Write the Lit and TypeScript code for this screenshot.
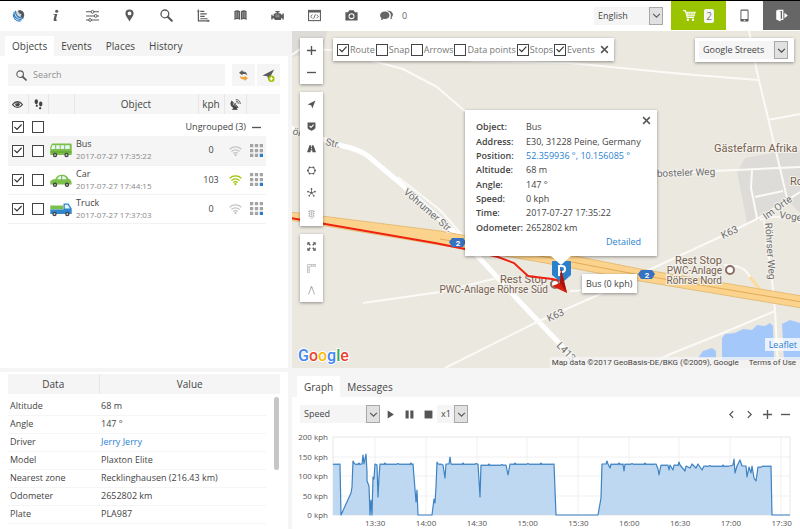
import { LitElement, html, svg, css } from "lit";
import { customElement, state } from "lit/decorators.js";
import { classMap } from "lit/directives/class-map.js";

const glyphs: Record<string, unknown> = {
  logo: svg`<circle cx="9.5" cy="7" r="5.6" fill="#d5d8db"/><path d="M8 1.6C12 .6 15.2 3.5 15 7.4c0 2-.8 3.400-2 4.500L10.500 9l1.200-2.500L9 5.500 7.500 3z" fill="#55585c"/><path d="M2.500 3.500C2 9 5.500 12.800 12 13.400M1.600 6.500C1.600 11.500 5 15 10.500 15M4.200 2.200C4.200 7 7.500 11 14 11.600" fill="none" stroke="#2f7cc4" stroke-width="1.500"/>`,
  info: svg`<circle cx="9.500" cy="2.700" r="1.900" fill="currentColor"/><path d="M5 6h5.200L8.600 12.600c-.1.600.2.800 1.600.2l-.2.900C8 15.300 5.200 15.200 5.700 12.800L7 7.500c0-.500-.7-.600-2.200-.600z" fill="currentColor"/>`,
  sliders: svg`<path d="M0 3.500h16M0 8.500h16M0 13.500h16" stroke="currentColor" stroke-width="1.300"/><g fill="#fff" stroke="currentColor" stroke-width="1.200"><circle cx="8" cy="3.500" r="1.700"/><circle cx="12" cy="8.500" r="1.700"/><circle cx="5" cy="13.500" r="1.700"/></g>`,
  pin: svg`<path fill="currentColor" fill-rule="evenodd" d="M8 .5a5 5 0 0 0-5 5C3 9 6.500 11.500 8 15.800 9.500 11.500 13 9 13 5.500a5 5 0 0 0-5-5zm0 2.700a2.300 2.300 0 1 1 0 4.600 2.300 2.300 0 0 1 0-4.600z"/>`,
  search: svg`<circle cx="6" cy="6" r="4.800" fill="none" stroke="currentColor" stroke-width="1.600"/><path d="M9.500 9.500l5 5" stroke="currentColor" stroke-width="2.600" stroke-linecap="round"/>`,
  bars: svg`<path d="M1.700 1v13.500H15M4 3h5M4 6h8M4 9h5.500M4 12h9" fill="none" stroke="currentColor" stroke-width="1.500"/><path d="M0 3l1.700-2.500L3.400 3zM13 12.800l2.800 1.700-2.800 1.700z" fill="currentColor"/>`,
  book: svg`<path fill="currentColor" d="M.5 2.500C3 1 5.500 1.200 7.500 2.800v10.700C5.500 12 3 12 .5 13.500zM15.500 2.500C13 1 10.500 1.200 8.500 2.800v10.700c2-1.500 4.500-1.500 7 0z"/><path d="M2.600 3.500v7.500M5.200 3.500v7.500M10.800 3.500v7.500M13.400 3.500v7.500" stroke="#fff" stroke-width=".5"/>`,
  engine: svg`<path fill="currentColor" d="M5.500 2.500h5V4H9v1.300h2.500L13 7h1V5.500h1.800v7.300H14V11h-1l-1 2.500H5L3.200 11.500H2V13H.3V7H2v1.500h1.200V6.500l1.800-1.200h2V4H5.500z"/><path d="M5.500 7.500h5M5.500 9.500h5" stroke="#fff" stroke-width=".5"/>`,
  code: svg`<rect x=".7" y="1.700" width="14.600" height="12.600" fill="none" stroke="currentColor" stroke-width="1.300"/><path d="M1 3.300h14" stroke="currentColor" stroke-width="2"/><path d="M5.500 7L3.300 9.200l2.200 2.200M10.500 7l2.200 2.200-2.200 2.200M9 6.700L7 11.800" fill="none" stroke="currentColor" stroke-width="1.100"/>`,
  camera: svg`<path fill="currentColor" fill-rule="evenodd" d="M.5 4h3.300l1.400-2.500h5.600L12.200 4h3.300v10H.5zM8 5.100a3.700 3.700 0 1 0 0 7.400 3.700 3.700 0 0 0 0-7.400z"/><circle cx="8" cy="8.800" r="2.400" fill="currentColor"/>`,
  chat: svg`<path fill="currentColor" d="M6 3c3.300 0 5.700 2 5.700 4.600S9.300 12.200 6 12.200c-.6 0-1.200 0-1.700-.2-1 1.200-2 1.700-3.500 1.800.8-.8 1-1.700 1-2.700C.7 10.200.1 9 .1 7.600.1 5 2.700 3 6 3z"/><path fill="currentColor" d="M8 2.200c4-.8 7.900 1.300 7.900 4.600 0 1.400-.6 2.500-1.600 3.300 0 .8.300 1.700 1 2.400-1.300 0-2-.4-2.800-1C15 7.500 12.500 3 8 2.200z"/>`,
  cart: svg`<path d="M.3 2h2.500l2.400 8.500h8.300" fill="none" stroke="currentColor" stroke-width="1.300"/><path fill="currentColor" d="M3.800 3.500h12L14 9.200H5.400z"/><circle cx="6" cy="13.300" r="1.500" fill="currentColor"/><circle cx="12.300" cy="13.300" r="1.500" fill="currentColor"/><path d="M7 3.500l.6 5.700M9.800 3.500v5.700M12.800 3.500l-.8 5.700M4.500 6.200h10.500" stroke="#9bc400" stroke-width=".6"/>`,
  phone: svg`<path fill="currentColor" fill-rule="evenodd" d="M4.500.5h7a1.500 1.500 0 0 1 1.500 1.500v12a1.500 1.500 0 0 1-1.500 1.500h-7A1.500 1.500 0 0 1 3 14V2A1.500 1.500 0 0 1 4.500.5zM4.200 2v10.300h7.600V2zM7 13.200v1.200h2v-1.200z"/>`,
  logout: svg`<path fill="currentColor" d="M1.500 1.500L7 3v12.500L1.500 13z"/><path d="M3 1.800h6.500v11H7" fill="none" stroke="currentColor" stroke-width="1.600"/><path d="M11.500 4.500L15.800 8l-4.300 3.500z" fill="currentColor"/>`,
  refresh: svg`<path fill="#5b5b5b" d="M6.500 0v2.300C10.500 2 13.300 4 13.500 8 12 5.800 10 5.500 6.500 5.700V8L1.500 4z"/><path fill="#f2a33a" d="M9.500 16v-2.300C5.500 14 2.700 12 2.500 8c1.500 2.200 3.500 2.500 7 2.300V8l5 4z"/>`,
  addObject: svg`<path fill="#5b5b5b" d="M15 .5L.5 8l6 .8 1.500 4.700z"/><circle cx="11.500" cy="12" r="3.900" fill="#9bc400"/><path d="M9.300 12h4.400M11.500 9.800v4.400" stroke="#fff" stroke-width="1.500"/>`,
  eye: svg`<path d="M.8 8.200C3 5 5.400 3.800 8 3.800s5 1.200 7.200 4.400C13 11.200 10.600 12.300 8 12.300S3 11.200.8 8.200z" fill="none" stroke="currentColor" stroke-width="1.500"/><circle cx="8" cy="7.800" r="3.200" fill="currentColor"/><path d="M6.300 7.500A2 2 0 0 1 8 6" stroke="#fff" stroke-width=".8" fill="none"/>`,
  feet: svg`<g fill="currentColor"><ellipse cx="4.800" cy="4" rx="2.500" ry="3.600"/><ellipse cx="5.500" cy="9.700" rx="1.500" ry="1.700"/><ellipse cx="11.200" cy="7.300" rx="2.500" ry="3.600"/><ellipse cx="10.300" cy="13.300" rx="1.500" ry="1.700"/></g>`,
  dish: svg`<path d="M2.500 3.500a6.200 6.200 0 0 0 8.600 8.400z" fill="currentColor" stroke="currentColor" stroke-width="1.600"/><path d="M4 6l5 5M6.300 5.500l-2 4" stroke="#f5f5f5" stroke-width=".8"/><path d="M3.500 15.200h7L7 11.500zM6.500 8.300l2.700-3" fill="currentColor" stroke="currentColor" stroke-width="1.100"/><path d="M8.500 3.300a3.500 3.500 0 0 1 3.700 3.800M8.500.8a6 6 0 0 1 6.400 6.500" fill="none" stroke="currentColor" stroke-width="1.200"/>`,
  wifi: svg`<path d="M.8 6.500a10.500 10.500 0 0 1 14.400 0M3 9.200a7.300 7.300 0 0 1 10 0M5.300 11.800a4 4 0 0 1 5.400 0" fill="none" stroke="currentColor" stroke-width="1.600"/><circle cx="8" cy="13.600" r="1.400" fill="currentColor"/>`,
  grid: svg`<path fill="#a3a3a3" d="M0 0h4v4H0zM6 0h4v4H6zM12 0h4v4h-4zM0 6h4v4H0zM6 6h4v4H6zM12 6h4v4h-4zM0 12h4v4H0zM6 12h4v4H6z"/><path fill="#2b78cf" d="M12 12h4v4h-4z"/>`,
  plus: svg`<path d="M8 0v16M0 8h16" stroke="currentColor" stroke-width="2.400"/>`,
  minus: svg`<path d="M0 8h16" stroke="currentColor" stroke-width="2.400"/>`,
  close: svg`<path d="M2 2l12 12M14 2L2 14" stroke="currentColor" stroke-width="2.600"/>`,
  left: svg`<path d="M11 2L5 8l6 6" fill="none" stroke="currentColor" stroke-width="2.200"/>`,
  right: svg`<path d="M5 2l6 6-6 6" fill="none" stroke="currentColor" stroke-width="2.200"/>`,
  down: svg`<path d="M2 5l6 6 6-6" fill="none" stroke="currentColor" stroke-width="2"/>`,
  play: svg`<path d="M3 1l11 7-11 7z" fill="currentColor"/>`,
  pause: svg`<path d="M1 1h5.500v14H1zM9.500 1H15v14H9.500z" fill="currentColor"/>`,
  stop: svg`<path d="M1 1h14v14H1z" fill="currentColor"/>`,
  nav: svg`<path d="M15 1L1 8l6.500 1.500L9.500 15z" fill="currentColor"/>`,
  shield: svg`<path d="M1 1h14v9c0 2-3 3.500-7 5.500C4 13.500 1 12 1 10z" fill="currentColor"/><path d="M4.500 7l2.700 2.700 4.500-5" fill="none" stroke="#fff" stroke-width="1.800"/>`,
  road: svg`<path d="M4.500 2h2.700v3h1.600V2h2.700L16 14.500H9.500V11h-3v3.500H0z" fill="currentColor"/><path d="M8 6.500v3" stroke="#fff" stroke-width="1.400"/>`,
  hexagon: svg`<path d="M4.500 2.500h7L15 8l-3.500 5.500h-7L1 8z" fill="none" stroke="currentColor" stroke-width="1.300"/><g fill="currentColor"><circle cx="4.500" cy="2.500" r="1.700"/><circle cx="11.500" cy="2.500" r="1.700"/><circle cx="14.200" cy="8" r="1.700"/><circle cx="1.800" cy="8" r="1.700"/><circle cx="4.500" cy="13.500" r="1.700"/><circle cx="11.500" cy="13.500" r="1.700"/></g>`,
  cluster: svg`<path d="M8 8.500V2M8 8.500L2 6.500M8 8.500l6-2M8 8.500l-4 5M8 8.500l4 5" stroke="currentColor" stroke-width="1.300"/><g fill="currentColor"><circle cx="8" cy="8.500" r="1.900"/><circle cx="8" cy="1.700" r="1.500"/><circle cx="1.700" cy="6.300" r="1.500"/><circle cx="14.300" cy="6.300" r="1.500"/><circle cx="4" cy="13.800" r="1.500"/><circle cx="12" cy="13.800" r="1.500"/></g>`,
  traffic: svg`<path d="M5 .5h6v12.500L8 15.500 5 13z" fill="none" stroke="currentColor" stroke-width="1.200"/><path d="M2 2.500h3M11 2.500h3M2.500 6.500H5M11 6.500h2.500M2.500 10.500H5M11 10.500h2.500" stroke="currentColor" stroke-width="1.600"/><g fill="currentColor"><circle cx="8" cy="3.500" r="1.400"/><circle cx="8" cy="7.300" r="1.400"/><circle cx="8" cy="11" r="1.400"/></g>`,
  expand: svg`<path d="M.5.5h5.300L4 2.300l2.700 2.700L5 6.700 2.300 4 .5 5.800zM15.500.5v5.300L13.700 4 11 6.700 9.300 5 12 2.300 10.200.5zM.5 15.500v-5.300L2.300 12 5 9.300 6.700 11 4 13.700l1.800 1.800zM15.500 15.500h-5.300l1.800-1.800L9.300 11 11 9.300l2.700 2.700 1.800-1.800z" fill="currentColor"/>`,
  ruler: svg`<path d="M1 16V1h15v3H4v12z" fill="none" stroke="currentColor" stroke-width="1.200"/><path d="M1.500 7H4M1.500 11H4M8 1.500V4M12 1.500V4" stroke="currentColor" stroke-width="1"/>`,
  compass: svg`<path d="M8 1L2.500 15M8 1l5.500 14" fill="none" stroke="currentColor" stroke-width="1.700"/><circle cx="8" cy="2" r="1.600" fill="currentColor"/>`,
};

const icon = (name: string, cls = "") =>
  html`<svg class="ic ${cls}" viewBox="0 0 16 16" aria-hidden="true">${glyphs[name]}</svg>`;

const vehicles: Record<string, unknown> = {
  Bus: svg`<path fill="#7cc04b" d="M2 1.500h18.500c.8 0 1.200.5 1.200 1.300V13H.3V5z"/><path fill="#e8f6f8" d="M2.200 3.300h3v3.800h-4zM6.200 3.300h3.500v3.800H6.200zM10.700 3.300h3.500v3.800h-3.500zM15.200 3.300h4.500v3.800h-4.500z"/><path fill="#5b9c33" d="M.3 9.500h21.400v1H.3z"/><g fill="#444"><circle cx="5" cy="13" r="2.200"/><circle cx="16.500" cy="13" r="2.200"/></g><g fill="#ccc"><circle cx="5" cy="13" r=".9"/><circle cx="16.500" cy="13" r=".9"/></g>`,
  Car: svg`<path fill="#7cc04b" d="M.3 9.500C1 8 3 7.300 5.300 7 7 4 8.500 2.800 12 2.800c4 0 5.500 1.700 6.500 4 2.300.5 3.200 2 3.200 5.700H.3z"/><path fill="#e8f6f8" d="M7 7.300c1-2 2-3 4-3.200v3.200zM12.200 4.100c2.300 0 3.500 1 4.300 3.200h-4.300z"/><g fill="#444"><circle cx="5" cy="12.800" r="2.200"/><circle cx="17" cy="12.800" r="2.200"/></g><g fill="#ccc"><circle cx="5" cy="12.800" r=".9"/><circle cx="17" cy="12.800" r=".9"/></g>`,
  Truck: svg`<path fill="#7cc04b" d="M.3 4.500h13v4H.3z"/><path fill="#2f86cf" d="M.3 8.500h13.200V2.500h5l3.200 5V13H.3z"/><path fill="#e8f6f8" d="M14.800 3.800h3l2.200 3.700h-5.200z"/><g fill="#444"><circle cx="4.500" cy="13" r="2.200"/><circle cx="17.300" cy="13" r="2.200"/></g><g fill="#ccc"><circle cx="4.500" cy="13" r=".9"/><circle cx="17.300" cy="13" r=".9"/></g>`,
};

const objects = [
  { name: "Bus", time: "2017-07-27 17:35:22", speed: 0, online: false },
  { name: "Car", time: "2017-07-27 17:44:15", speed: 103, online: true },
  { name: "Truck", time: "2017-07-27 17:37:03", speed: 0, online: false },
];

const details: [string, string][] = [
  ["Altitude", "68 m"],
  ["Angle", "147 °"],
  ["Driver", "Jerry Jerry"],
  ["Model", "Plaxton Elite"],
  ["Nearest zone", "Recklinghausen (216.43 km)"],
  ["Odometer", "2652802 km"],
  ["Plate", "PLA987"],
];

const popupRows: [string, string][] = [
  ["Object:", "Bus"],
  ["Address:", "E30, 31228 Peine, Germany"],
  ["Position:", "52.359936 °, 10.156085 °"],
  ["Altitude:", "68 m"],
  ["Angle:", "147 °"],
  ["Speed:", "0 kph"],
  ["Time:", "2017-07-27 17:35:22"],
  ["Odometer:", "2652802 km"],
];

const layers: [string, boolean][] = [
  ["Route", true],
  ["Snap", false],
  ["Arrows", false],
  ["Data points", false],
  ["Stops", true],
  ["Events", true],
];

const menu = ["logo", "info", "sliders", "pin", "search", "bars", "book", "engine", "code", "camera"];

// Speed samples as [x, y] in a 457 x 78 plot.
const speed: [number, number][] = [
  [0, 27], [7, 27], [8, 78], [18, 56], [19, 50], [20, 24], [21, 26], [22, 27], [29, 27], [30, 18], [31, 27], [33, 17],
  [34, 35], [34, 44], [36, 49], [37, 78], [38, 63], [39, 78], [40, 40], [41, 42], [42, 27], [44, 28], [45, 60],
  [46, 40], [47, 27], [80, 27], [83, 65], [84, 53], [85, 78], [99, 78], [101, 62], [102, 66], [103, 50], [104, 25], [105, 27],
  [110, 28], [112, 41], [113, 27], [116, 27], [117, 20], [118, 27], [145, 27], [146, 43], [147, 60], [148, 28],
  [173, 28], [175, 38], [177, 27], [221, 27], [223, 78], [265, 78], [268, 61], [269, 27], [273, 27], [274, 24],
  [275, 27], [277, 31], [278, 27], [290, 27], [291, 34], [292, 27], [323, 27], [325, 32], [326, 38], [328, 28],
  [335, 28], [336, 33], [337, 28], [340, 33], [341, 28], [346, 25], [347, 28], [352, 34], [353, 29], [357, 31],
  [359, 27], [363, 31], [365, 27], [369, 33], [371, 29], [397, 29], [400, 28], [401, 22], [402, 36], [404, 29],
  [407, 23], [409, 29], [413, 29], [414, 40], [416, 30], [418, 36], [419, 29], [421, 41], [423, 44], [425, 30],
  [430, 29], [438, 29], [439, 78], [457, 78],
];

function speedPath(): string {
  const parts: string[] = [];
  speed.forEach(([x, y], i) => {
    parts.push(`${x} ${y}`);
    const next = speed[i + 1];
    if (next && next[0] - x > 4 && y < 32 && next[1] < 32) {
      for (let k = x + 1; k < next[0]; k++) {
        parts.push(`${k} ${y + (k % 2 ? 0.6 : 0) - ((k * 7) % 13 === 0 ? 1 : 0)}`);
      }
    }
  });
  return "M" + parts.join("L");
}

const base = css`
  * { box-sizing: border-box; }
  button { border: 0; padding: 0; margin: 0; background: none; color: inherit; font: inherit; display: flex; align-items: center; justify-content: center; }
  a { color: #2b7fd0; text-decoration: none; }
  .ic { width: 13px; height: 13px; display: block; flex: none; }
  .s9 { width: 9px; height: 9px; }
  .s11 { width: 11px; height: 11px; }
  .pick { display: grid; align-items: center; background: #f5f5f5; height: 18px; }
  .pick select { grid-area: 1 / 1; appearance: none; border: 0; background: none; font: inherit; color: #444; padding: 0 18px 0 4px; margin: 0; width: 100%; height: 100%; }
  .pick .arrow { grid-area: 1 / 1; justify-self: end; width: 14px; height: 18px; border: 1px solid #a8a8a8; background: #e1e1e1; display: flex; align-items: center; justify-content: center; pointer-events: none; }
  input[type="checkbox"] { appearance: none; width: 12px; height: 12px; margin: 0; border: 1px solid #444; background: #fff; display: inline-grid; place-items: center; flex: none; vertical-align: middle; }
  input[type="checkbox"]:checked::after { content: ""; width: 8px; height: 8px; background: #333; clip-path: polygon(0 50%, 10% 40%, 38% 66%, 90% 10%, 100% 20%, 38% 86%); }
  .tabs { display: flex; align-items: flex-end; background: #f5f5f5; padding: 5px 5px 0; font-size: 10px; }
  .tabs button { height: 20px; padding: 0 7px; color: #444; }
  .tabs .on { background: #fff; }
`;

const pick = (label: string, value: string) => html`
  <span class="pick">
    <select aria-label=${label}><option>${value}</option></select>
    <span class="arrow">${icon("down", "s9")}</span>
  </span>`;

@customElement("tracker-map")
export class TrackerMap extends LitElement {
  static styles = [
    base,
    css`
      :host { display: block; position: relative; overflow: hidden; background: #ebe8e0; min-height: 337px; }
      .canvas { position: absolute; inset: 0; width: 100%; height: 100%; font-family: Roboto, "Open Sans", sans-serif; }
      .road { fill: none; stroke: #fff; stroke-width: 2; stroke-linejoin: round; }
      .thin { stroke: #fbfaf6; }
      .wide { stroke-width: 5; }
      .street { font-size: 10px; fill: #6e6e6e; paint-order: stroke; stroke: #f4f2ed; stroke-width: 2px; }
      .place { font-size: 11px; fill: #75604f; paint-order: stroke; stroke: #f4f2ed; stroke-width: 2px; }
      .sub { font-size: 10px; }
      .exit { font-size: 8px; font-weight: 700; fill: #fff; text-anchor: middle; }
      .brand { font-size: 16px; font-weight: 500; paint-order: stroke; stroke: #fff; stroke-width: 2px; }
      .overlay { position: absolute; inset: 7px 6px auto 8px; display: flex; align-items: flex-start; gap: 10px; }
      .card { background: #fff; box-shadow: 0 1px 3px rgba(0, 0, 0, 0.4); }
      .stack { display: flex; flex-direction: column; gap: 8px; }
      .tools { padding: 1px 0; width: 23px; color: #555; }
      .tools button { width: 23px; height: 22px; }
      .tools .off { color: #aaa; }
      .layers { display: flex; align-items: center; height: 23px; padding: 0 5px 0 4px; gap: 1px; color: #777; }
      .layers label { display: flex; align-items: center; gap: 1px; white-space: nowrap; }
      .layers button { color: #555; margin-left: 4px; }
      .source { margin-left: auto; width: 99px; padding: 3px 6px 3px 4px; }
      .popup { position: absolute; left: 173px; top: 79px; width: 192px; padding: 10px 11px 8px; color: #444; }
      .popup::after { content: ""; position: absolute; left: 86px; top: 100%; width: 20px; height: 9px; background: #fff; clip-path: polygon(0 0, 100% 0, 50% 100%); }
      .popup dl { display: grid; grid-template-columns: 50px auto; grid-auto-rows: 1fr; align-items: center; min-height: 115px; margin: 0; line-height: 14px; white-space: nowrap; }
      .popup dt { font-weight: 600; }
      .popup dd { margin: 0; }
      .popup .more { display: block; text-align: right; padding-right: 5px; line-height: 13px; }
      .popup .x { position: absolute; right: 6px; top: 6px; color: #555; }
      .tip { position: absolute; left: 290px; top: 243px; padding: 3px 4px; line-height: 13px; color: #444; white-space: nowrap; }
      .credits { position: absolute; right: 0; bottom: 0; display: flex; flex-direction: column; align-items: flex-end; gap: 6px; line-height: 11px; }
      .leaflet { background: rgba(255, 255, 255, 0.75); padding: 1px 3px 1px 4px; }
      .terms { display: flex; gap: 10px; background: rgba(245, 245, 245, 0.75); padding: 0 4px 0 2px; font-family: Roboto, sans-serif; font-size: 8px; color: #444; white-space: nowrap; }
      .terms a { color: #444; }
    `,
  ];

  render() {
    return html`
      <svg class="canvas" viewBox="292 31 508 337" preserveAspectRatio="xMinYMin slice" role="img" aria-label="Map">
        <path fill="#dddcd9" d="M737 172L745 158 773 153 800 151V213L787 200 758 220 747 223z" />
        <path fill="#dddcd9" d="M292 31h35l-3 14-12 8-20 4z" />
        <path fill="#a5c8fa" d="M722 338l3-4 10-1 8-4 9 1 5-5 8 1 5-3 3 3 1 34h-52zM782 324l8-4 10 3v37h-16zM698 358l5-7 9-3 4 3v7z" />
        <path class="road wide" d="M285 126L343 146Q358 149 368 156L400 183 433 213 460 237 520 302 558 342 588 375" />
        <path class="road thin" d="M398 177L440 210 464 237M285 60L300 49 333 50 373 61 403 69 437 87 466 112M445 368L537 322 598 295 653 268 720 237 757 219 800 192" />
        <path class="road thin" d="M363 303L440 292 497 278M470 61L570 63 683 74 758 80M749 31L757 72 768 118 787 198M768 120L800 114M658 174L713 171 800 167" />
        <path class="road thin" d="M752 170L751 188 757 218M755 197L783 191M764 221L772 280 775 310 778 368M775 311L723 333 673 353 636 370M760 220Q775 213 800 222M570 291L590 290M724 265Q743 265 748 274L752 280" />
        <path d="M750 277L762 292" fill="none" stroke="#fbdc9c" stroke-width="3" />
        <path fill="#fbd38c" stroke="#e5bd78" d="M290 212L440 231 540 249 640 269 700 279 802 296V308L700 291 640 281 540 262 440 245 290 220z" />
        <path fill="none" stroke="#e0ac5e" d="M440 239L540 256 640 275 700 285 802 302" />
        <g class="street">
          <text transform="translate(292 134) rotate(18)">öhr</text>
          <text transform="translate(325 145) rotate(12)">Str.</text>
          <text transform="translate(403 193) rotate(41)">Vöhrumer Str.</text>
          <text transform="translate(657 177) rotate(-2)">bosteler Weg</text>
          <text transform="translate(723 239) rotate(-25)">K63</text>
          <text transform="translate(549 322) rotate(-25)">K63</text>
          <text transform="translate(556 346) rotate(46)">L413</text>
          <text transform="translate(766 220) rotate(-36)">Im Orte</text>
          <text transform="translate(779 218) rotate(8)">Vogel</text>
          <text transform="translate(765 223) rotate(86)">Röhrser Weg</text>
        </g>
        <g class="place">
          <text x="714" y="152">Gästefarm Afrika</text>
          <text x="790" y="185">Ro</text>
          <text x="722" y="264" text-anchor="end">Rest Stop</text>
          <text class="sub" x="722" y="274" text-anchor="end">PWC-Anlage</text>
          <text class="sub" x="722" y="284" text-anchor="end">Röhrse Nord</text>
          <text x="547" y="283" text-anchor="end">Rest Stop</text>
          <text class="sub" x="548" y="293" text-anchor="end">PWC-Anlage Röhrse Süd</text>
        </g>
        <g fill="#fff" stroke="#8a6d62" stroke-width="2"><circle cx="730" cy="270" r="4" /><circle cx="555" cy="284" r="4" /></g>
        <path d="M290 218L435 243 465 249 498 257 514 263 528 276 552 279 562 281" fill="none" stroke="#ee2211" stroke-width="2" />
        <g fill="#3672c0"><path d="M452 238h11l3 4-3 5h-11l-3-5zM641 270h11l3 4-3 5h-11l-3-5z" /></g>
        <g class="exit"><text x="458" y="246">2</text><text x="647" y="278">2</text></g>
        <path fill="#2b80cc" d="M553 261h17a1 1 0 0 1 1 1v13l-9 8-10-8v-13a1 1 0 0 1 1-1z" />
        <path d="M559 276v-10h3a2.500 2.500 0 0 1 0 6h-3" fill="none" stroke="#fff" stroke-width="2" />
        <path fill="#d8200f" d="M561 269L567 293 552 286 560 283z" /><path fill="#a81408" d="M561 269L567 293 560 283z" />
        <text class="brand" x="298" y="361"><tspan fill="#4285f4">G</tspan><tspan fill="#ea4335">o</tspan><tspan fill="#fbbc05">o</tspan><tspan fill="#4285f4">g</tspan><tspan fill="#34a853">l</tspan><tspan fill="#ea4335">e</tspan></text>
      </svg>

      <div class="overlay">
        <div class="stack">
          ${[["plus", "minus"], ["nav", "shield", "road", "hexagon", "cluster", "traffic"], ["expand", "ruler", "compass"]].map(
            (group) => html`<div class="card tools">
              ${group.map((n) => html`<button aria-label=${n} class=${classMap({ off: ["traffic", "ruler", "compass"].includes(n) })}>${icon(n, "s9")}</button>`)}
            </div>`
          )}
        </div>
        <div class="card layers">
          ${layers.map(([name, on]) => html`<label><input type="checkbox" .checked=${on} />${name}</label>`)}
          <button aria-label="Close layers">${icon("close", "s9")}</button>
        </div>
        <div class="card source">${pick("Map source", "Google Streets")}</div>
      </div>

      <div class="card tip">Bus (0 kph)</div>
      <div class="card popup">
        <button class="x" aria-label="Close">${icon("close", "s9")}</button>
        <dl>
          ${popupRows.map(([k, v]) => html`<dt>${k}</dt><dd>${k === "Position:" ? html`<a href="#position">${v}</a>` : v}</dd>`)}
        </dl>
        <a class="more" href="#detailed">Detailed</a>
      </div>

      <div class="credits">
        <a class="leaflet" href="#leaflet">Leaflet</a>
        <div class="terms"><span>Map data ©2017 GeoBasis-DE/BKG (©2009), Google</span><a href="#terms">Terms of Use</a></div>
      </div>
    `;
  }
}

@customElement("speed-graph")
export class SpeedGraph extends LitElement {
  static styles = [
    base,
    css`
      :host { display: flex; flex-direction: column; background: #fff; min-width: 0; }
      .tabs { padding-top: 8px; }
      .tabs button { height: 21px; }
      .bar { display: flex; align-items: center; padding: 7px 10px 0 8px; height: 27px; color: #555; }
      .param { width: 80px; }
      .rate { width: 31px; }
      .play { display: flex; gap: 10px; padding: 0 4px 0 6px; }
      .nav { display: flex; gap: 9px; margin-left: auto; }
      .chart { display: grid; grid-template-columns: 41px minmax(0, 1fr); padding: 8px 10px 1px 0; font-size: 8px; color: #555; line-height: 10px; }
      .y { display: flex; flex-direction: column; justify-content: space-between; align-items: flex-end; padding-right: 5px; height: 88px; white-space: nowrap; }
      .plot { width: 100%; height: 78px; margin-top: 5px; display: block; overflow: visible; }
      .frame { fill: none; stroke: #e6e6e6; stroke-width: 1; vector-effect: non-scaling-stroke; }
      .area { fill: #bfd8f1; }
      .line { fill: none; stroke: #3d82c2; stroke-width: 1.2px; vector-effect: non-scaling-stroke; stroke-linejoin: round; }
      .x { grid-column: 2; display: flex; justify-content: space-between; padding-left: 32px; margin-right: -2px; margin-top: -2px; }
    `,
  ];

  render() {
    const d = speedPath();
    return html`
      <div class="tabs"><button class="on">Graph</button><button>Messages</button></div>
      <div class="bar">
        <span class="param">${pick("Parameter", "Speed")}</span>
        <span class="play">
          <button aria-label="Play">${icon("play", "s9")}</button>
          <button aria-label="Pause">${icon("pause", "s9")}</button>
          <button aria-label="Stop">${icon("stop", "s9")}</button>
        </span>
        <span class="rate">${pick("Playback rate", "x1")}</span>
        <span class="nav">
          ${["left", "right", "plus", "minus"].map((n) => html`<button aria-label=${n}>${icon(n, "s9")}</button>`)}
        </span>
      </div>
      <div class="chart">
        <div class="y">${[200, 150, 100, 50, 0].map((v) => html`<span>${v} kph</span>`)}</div>
        <svg class="plot" viewBox="0 0 457 78" preserveAspectRatio="none" role="img" aria-label="Speed">
          ${[42, 93, 144, 194, 245, 296, 346, 397, 448].map((x) => svg`<path class="frame" opacity=".5" d="M${x} 0V78" />`)}
          ${[20, 39, 59].map((y) => svg`<path class="frame" opacity=".5" d="M0 ${y}H457" />`)}
          <rect class="frame" width="457" height="78" />
          <path class="area" d="${d}V78H0z" />
          <path class="line" d=${d} />
        </svg>
        <div class="x">
          ${["13:30", "14:00", "14:30", "15:00", "15:30", "16:00", "16:30", "17:00", "17:30"].map((t) => html`<span>${t}</span>`)}
        </div>
      </div>
    `;
  }
}

@customElement("app-root")
export class AppRoot extends LitElement {
  @state() private tab = "Objects";

  static styles = [
    base,
    css`
      :host { display: grid; grid-template: auto minmax(0, 1fr) auto / 288px minmax(0, 1fr); column-gap: 4px; min-height: 100vh; background: #f5f5f5; color: #444; font: 9px/12px "Open Sans", "Noto Sans", sans-serif; }
      .top { grid-column: 1 / -1; display: flex; height: 31px; border-top: 1px solid #000; border-bottom: 1px solid #fff; background: #fff; color: #5b5b5b; }
      .top > button { width: 37px; }
      .top .chat { width: auto; gap: 9px; padding-left: 10px; color: #666; }
      .lang { margin: auto 8px auto auto; width: 69px; }
      .top .cart { width: 55px; gap: 8px; background: #9bc400; color: #fff; }
      .count { background: #f5f5f5; color: #777; border-radius: 2px; padding: 1px 2px; font-size: 10px; }
      .top .exit { background: #666; color: #fff; }
      .side { background: #fff; min-width: 0; }
      .find { display: flex; gap: 2px; padding: 8px 8px 8px; }
      .box { flex: 1; display: flex; align-items: center; gap: 6px; height: 22px; margin-right: 5px; padding-left: 8px; background: #f5f5f5; color: #5b5b5b; }
      .box input { flex: 1; min-width: 0; border: 0; padding: 0; background: none; font: inherit; outline: 0; }
      .box input::placeholder { color: #909090; opacity: 1; }
      .find button { width: 23px; height: 22px; background: #f5f5f5; }
      table { border-collapse: collapse; table-layout: fixed; width: 272px; margin: 0 8px; }
      th { background: #f5f5f5; font-size: 10px; font-weight: 400; padding: 0; height: 20px; border-left: 1px solid #e6e6e6; }
      th:first-child { border-left: 0; }
      th .ic { margin: auto; }
      td { padding: 0; text-align: center; }
      .w20 { width: 20px; } .w26 { width: 26px; } .w22 { width: 22px; } .w14 { width: 14px; } .w91 { width: 91px; }
      .group td { height: 22px; padding-top: 4px; }
      .group .name { text-align: right; white-space: nowrap; }
      .obj td { height: 29px; border-bottom: 1px solid #f2f2f2; }
      .obj .pad { background: #fff; border: 0; }
      .obj .who { text-align: left; padding-left: 2px; white-space: nowrap; }
      .who small { display: block; font-size: 8px; color: #888; }
      .sel td { background: #f5f5f5; }
      td .ic { margin: auto; color: #c4c4c4; }
      td .live { color: #9bc400; }
      td .dark { color: #555; }
      .veh { width: 22px; height: 16px; display: block; margin: auto; }
      .info { background: #fff; border-top: 4px solid #f5f5f5; padding-top: 2px; display: grid; grid-template-columns: 1fr; align-content: start; min-width: 0; }
      .info table { grid-area: 1 / 1; }
      .info tbody::before { content: ""; display: block; height: 3px; }
      .info tbody td { height: 18px; text-align: left; padding-left: 2px; border-bottom: 1px solid #f5f5f5; white-space: nowrap; }
      .info .pad { border: 0; }
      .thumb { grid-area: 1 / 1; justify-self: end; width: 5px; height: 73px; margin: 23px 9px 0 0; border-radius: 3px; background: #c6c6c6; }
    `,
  ];

  render() {
    return html`
      <header class="top">
        ${menu.map((n) => html`<button aria-label=${n}>${icon(n)}</button>`)}
        <button class="chat" aria-label="Chat">${icon("chat")}<span>0</span></button>
        <span class="lang">${pick("Language", "English")}</span>
        <button class="cart" aria-label="Cart">${icon("cart")}<span class="count">2</span></button>
        <button aria-label="Mobile version">${icon("phone")}</button>
        <button class="exit" aria-label="Log out">${icon("logout")}</button>
      </header>

      <section class="side">
        <nav class="tabs">
          ${["Objects", "Events", "Places", "History"].map(
            (t) => html`<button class=${classMap({ on: t === this.tab })} @click=${() => (this.tab = t)}>${t}</button>`
          )}
        </nav>
        <div class="find">
          <label class="box">${icon("search", "s11")}<input type="text" placeholder="Search" aria-label="Search" /></label>
          <button aria-label="Reload">${icon("refresh", "s11")}</button>
          <button aria-label="Add object">${icon("addObject")}</button>
        </div>
        <table>
          <colgroup><col class="w20" /><col class="w20" /><col class="w26" /><col /><col class="w26" /><col class="w22" /><col class="w20" /><col class="w14" /></colgroup>
          <thead>
            <tr>
              <th>${icon("eye", "s11")}</th><th>${icon("feet", "s11")}</th><th></th><th>Object</th><th>kph</th><th>${icon("dish", "s11")}</th><th colspan="2"></th>
            </tr>
          </thead>
          <tbody>
            <tr class="group">
              <td><input type="checkbox" aria-label="Show group" checked /></td>
              <td><input type="checkbox" aria-label="Follow group" /></td>
              <td class="name" colspan="4">Ungrouped (3)</td>
              <td>${icon("minus", "s9 dark")}</td><td></td>
            </tr>
            ${objects.map(
              (o, i) => html`<tr class=${classMap({ obj: true, sel: i === 0 })}>
                <td><input type="checkbox" aria-label="Show ${o.name}" checked /></td>
                <td><input type="checkbox" aria-label="Follow ${o.name}" /></td>
                <td><svg class="veh" viewBox="0 0 22 16">${vehicles[o.name]}</svg></td>
                <td class="who">${o.name}<small>${o.time}</small></td>
                <td>${o.speed}</td>
                <td>${icon("wifi", o.online ? "live" : "")}</td>
                <td>${icon("grid")}</td>
                <td class="pad"></td>
              </tr>`
            )}
          </tbody>
        </table>
      </section>

      <tracker-map></tracker-map>

      <section class="info">
        <table>
          <colgroup><col class="w91" /><col /><col class="w14" /></colgroup>
          <thead><tr><th>Data</th><th colspan="2">Value</th></tr></thead>
          <tbody>
            ${details.map(([k, v]) => html`<tr><td>${k}</td><td>${k === "Driver" ? html`<a href="#driver">${v}</a>` : v}</td><td class="pad"></td></tr>`)}
          </tbody>
        </table>
        <div class="thumb"></div>
      </section>

      <speed-graph></speed-graph>
    `;
  }
}
